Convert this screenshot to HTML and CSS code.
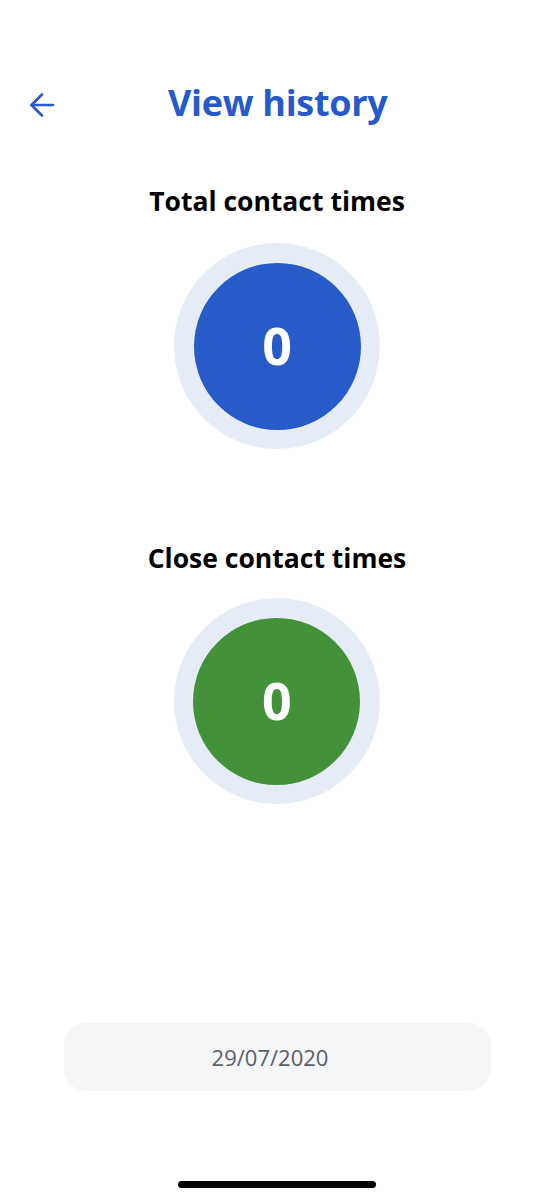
FILE: index.html
```html
<!DOCTYPE html>
<html lang="en">
<head>
<meta charset="utf-8">
<title>View history</title>
<link rel="stylesheet" href="styles.css">
</head>
<body>
<div class="screen">
  <header class="header">
    <button class="back" aria-label="Back">
      <svg width="26" height="26" viewBox="0 0 26 26" fill="none" stroke="#2659c9" stroke-width="2.6" stroke-linecap="round" stroke-linejoin="round">
        <path d="M24 13H2.5"/>
        <path d="M13 2.5L2.5 13L13 23.5"/>
      </svg>
    </button>
    <h1 class="title">View history</h1>
  </header>

  <section class="stat stat-first">
    <h2 class="stat-title">Total contact times</h2>
    <div class="ring">
      <div class="dot dot-blue">0</div>
    </div>
  </section>

  <section class="stat stat-second">
    <h2 class="stat-title">Close contact times</h2>
    <div class="ring">
      <div class="dot dot-green">0</div>
    </div>
  </section>

  <div class="date-box">29/07/2020</div>

  <div class="home-indicator"></div>
</div>
</body>
</html>
```

FILE: styles.css
```css
* { box-sizing: border-box; }

html, body {
  margin: 0;
  padding: 0;
  background: #ffffff;
}

body {
  font-family: "Open Sans", "Noto Sans", sans-serif;
  color: #000;
}

.screen {
  width: 554px;
  height: 1200px;
  display: flex;
  flex-direction: column;
  align-items: center;
  overflow: hidden;
}

.header {
  align-self: stretch;
  display: flex;
  align-items: center;
  margin-top: 79px;
  height: 48px;
  padding-left: 29px;
  gap: 113px;
}

.back {
  background: none;
  border: 0;
  padding: 0;
  width: 26px;
  height: 26px;
  display: flex;
  align-items: center;
  justify-content: center;
  margin-top: 4px;
}

.title {
  margin: 0;
  font-size: 36px;
  line-height: 48px;
  font-weight: 700;
  color: #2659c9;
  letter-spacing: -0.3px;
}

.stat {
  display: flex;
  flex-direction: column;
  align-items: center;
}

.stat-first { margin-top: 57px; }
.stat-second { margin-top: 92px; }

.stat-title {
  margin: 0;
  font-size: 26.5px;
  line-height: 35px;
  font-weight: 700;
  color: #000;
}

.ring {
  margin-top: 24px;
  width: 206px;
  height: 206px;
  border-radius: 50%;
  background: #e6ecf6;
  display: flex;
  align-items: center;
  justify-content: center;
}

.stat-second .ring { margin-top: 22px; }

.dot {
  width: 167px;
  height: 167px;
  border-radius: 50%;
  display: flex;
  align-items: center;
  justify-content: center;
  color: #ffffff;
  font-size: 52px;
  font-weight: 700;
  line-height: 1;
  padding-bottom: 2px;
}

.dot-blue { background: #265bc9; }
.dot-green { background: #43923a; }

.date-box {
  margin-top: 219px;
  width: 427px;
  height: 68px;
  border-radius: 22px;
  background: #f5f6f8;
  display: flex;
  align-items: center;
  justify-content: center;
  padding-right: 14px;
  font-size: 22px;
  color: #5c5f66;
}

.home-indicator {
  margin-top: 90px;
  width: 198px;
  height: 7px;
  border-radius: 4px;
  background: #000;
}
```
